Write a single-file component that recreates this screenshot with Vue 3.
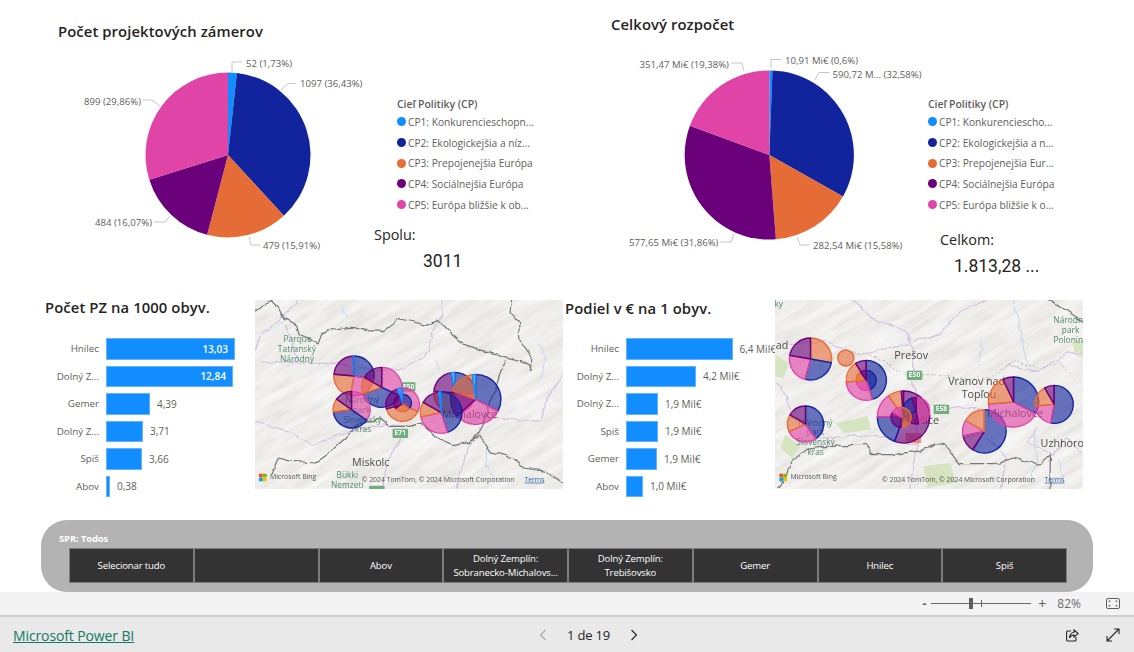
<script setup>
const C = { a: '#118DFF', b: '#12239E', c: '#E66C37', d: '#6B007B', e: '#E044A7' }

function point(cx, cy, r, deg) {
  const t = ((deg - 90) * Math.PI) / 180
  return [cx + r * Math.cos(t), cy + r * Math.sin(t)]
}
function arc(cx, cy, r, from, to) {
  if (to - from >= 360) {
    return `M${cx - r} ${cy}A${r} ${r} 0 1 1 ${cx + r} ${cy}A${r} ${r} 0 1 1 ${cx - r} ${cy}Z`
  }
  const [x0, y0] = point(cx, cy, r, from)
  const [x1, y1] = point(cx, cy, r, to)
  return `M${cx} ${cy}L${x0} ${y0}A${r} ${r} 0 ${to - from > 180 ? 1 : 0} 1 ${x1} ${y1}Z`
}
function slices(cx, cy, r, parts) {
  let from = 0
  return parts.map(([key, to]) => {
    const s = { d: arc(cx, cy, r, from, to), color: C[key] }
    from = to
    return s
  })
}
function pieFromPercents(cx, cy, r, pcts) {
  let sum = 0
  const keys = ['a', 'b', 'c', 'd', 'e']
  return slices(cx, cy, r, pcts.map((p, i) => {
    sum += p
    return [keys[i], i === pcts.length - 1 ? 360 : (sum / 100) * 360]
  }))
}

const legendLeft = ['CP1: Konkurencieschopn...', 'CP2: Ekologickejšia a níz...', 'CP3: Prepojenejšia Európa', 'CP4: Sociálnejšia Európa', 'CP5: Európa bližšie k ob...']
const legendRight = ['CP1: Konkurenciescho...', 'CP2: Ekologickejšia a n...', 'CP3: Prepojenejšia Eur...', 'CP4: Sociálnejšia Európa', 'CP5: Európa bližšie k o...']
const dots = [C.a, C.b, C.c, C.d, C.e]

const pies = [
  {
    cls: 'first', title: 'Počet projektových zámerov', vb: '58 50 312 240', w: 312,
    legend: legendLeft, statLabel: 'Spolu:', statValue: '3011',
    slices: pieFromPercents(228, 155, 82.5, [1.73, 36.43, 15.91, 16.07, 29.86]),
    labels: [
      { x: 246, y: 66.5, t: '52 (1,73%)' }, { x: 300, y: 87, t: '1097 (36,43%)' },
      { x: 84, y: 105, t: '899 (29,86%)' }, { x: 95, y: 226, t: '484 (16,07%)' }, { x: 263, y: 249, t: '479 (15,91%)' }
    ],
    leaders: ['M232 72V62H242', 'M281 90L288 83.5H296', 'M143 100H152L160 106', 'M154 222H165L170 216', 'M249 237L251 245H260']
  },
  {
    cls: 'second', title: 'Celkový rozpočet', vb: '611 50 314 240', w: 314,
    legend: legendRight, statLabel: 'Celkom:', statValue: '1.813,28 ...',
    slices: pieFromPercents(769.3, 155, 84.6, [0.6, 32.58, 15.58, 31.86, 19.38]),
    labels: [
      { x: 785, y: 64, t: '10,91 Mi€ (0,6%)' }, { x: 832.5, y: 78, t: '590,72 M... (32,58%)' },
      { x: 639.5, y: 68, t: '351,47 Mi€ (19,38%)' }, { x: 629, y: 246, t: '577,65 Mi€ (31,86%)' }, { x: 813, y: 249, t: '282,54 Mi€ (15,58%)' }
    ],
    leaders: ['M771 68V59.5H781', 'M815 80L819 72.5H829', 'M731 63H742L744 71', 'M720 242H731L734 234', 'M797 237L800 245H809']
  }
]

const chartLeft = {
  title: 'Počet PZ na 1000 obyv.',
  rows: [
    { l: 'Hnilec', w: 129, v: '13,03', inside: true }, { l: 'Dolný Z...', w: 127, v: '12,84', inside: true },
    { l: 'Gemer', w: 44, v: '4,39' }, { l: 'Dolný Z...', w: 37, v: '3,71' },
    { l: 'Spiš', w: 36, v: '3,66' }, { l: 'Abov', w: 4, v: '0,38' }
  ]
}
const chartRight = {
  title: 'Podiel v € na 1 obyv.',
  rows: [
    { l: 'Hnilec', w: 106.5, v: '6,4 Mil€' }, { l: 'Dolný Z...', w: 70, v: '4,2 Mil€' },
    { l: 'Dolný Z...', w: 32, v: '1,9 Mil€' }, { l: 'Spiš', w: 32, v: '1,9 Mil€' },
    { l: 'Gemer', w: 31, v: '1,9 Mil€' }, { l: 'Abov', w: 17, v: '1,0 Mil€' }
  ]
}

const bubbles1 = [
  slices(295, 234, 60, [['b', 100], ['e', 190], ['c', 275], ['d', 358], ['a', 360]]),
  slices(378, 268, 60, [['e', 115], ['b', 250], ['c', 300], ['d', 360]]),
  slices(288, 335, 55, [['e', 125], ['b', 262], ['c', 305], ['d', 360]]),
  slices(440, 320, 50, [['e', 115], ['c', 255], ['d', 340], ['a', 360]]),
  slices(440, 315, 26, [['b', 130], ['c', 230], ['d', 340], ['a', 360]]),
  slices(595, 285, 62, [['b', 95], ['e', 180], ['c', 275], ['d', 350], ['a', 360]]),
  slices(658, 304, 75, [['b', 118], ['e', 228], ['d', 290], ['c', 352], ['a', 360]]),
  slices(555, 344, 62, [['b', 162], ['e', 258], ['c', 300], ['d', 352], ['a', 360]])
]
const bubbles2 = [
  slices(115, 183, 63, [['c', 100], ['b', 195], ['e', 280], ['d', 360]]),
  slices(220, 180, 24, [['c', 360]]),
  slices(281, 247, 60, [['b', 162], ['e', 265], ['c', 328], ['d', 360]]),
  slices(281, 247, 30, [['b', 160], ['e', 262], ['c', 325], ['d', 360]]),
  slices(100, 378, 54, [['b', 145], ['e', 245], ['c', 300], ['d', 360]]),
  slices(392, 357, 78, [['d', 200], ['b', 270], ['e', 325], ['c', 355], ['d', 360]]),
  slices(430, 338, 40, [['e', 170], ['d', 240], ['b', 340], ['d', 360]]),
  slices(385, 358, 30, [['c', 180], ['d', 300], ['e', 360]]),
  slices(633, 400, 65, [['b', 212], ['d', 258], ['e', 300], ['c', 360]]),
  slices(720, 312, 75, [['b', 118], ['e', 265], ['c', 335], ['d', 360]]),
  slices(841, 319, 57, [['b', 190], ['e', 265], ['c', 330], ['d', 360]])
]

const maps = [
  {
    id: 'a', vb: '0 6 918 567', bubbles: bubbles1, greens: [],
    roads: [
      'M0 190Q100 197 240 195L330 215L440 215L520 160L530 100L555 60L560 6',
      'M0 155L20 110L90 50L130 6',
      'M0 370L100 400L170 440L280 400L390 380L450 385',
      'M450 395L400 480L380 573',
      'M520 340L640 370L700 360L850 370L870 300L918 235',
      'M650 420L610 520L600 573',
      'M90 80L130 190'
    ],
    rivers: ['M850 140L865 170L855 240', 'M690 440L690 500L720 550', 'M540 190L550 220', 'M260 30L275 60', 'M60 80L85 70'],
    borders: [
      'M0 40L25 22L50 10L70 30L85 60L125 85L132 108L185 135L200 108L240 92L290 88L330 98L385 100L400 88L430 62L470 72L510 82L548 68L585 105L625 140L680 158L740 178L790 190L815 200L820 218',
      'M745 190L725 255L680 375L650 430',
      'M50 530L70 480L110 490L180 495L215 470L270 420L300 385L370 360L400 385L460 385L495 375L540 420L590 440L640 430L670 415L700 460L770 480L800 510L870 520L918 555',
      'M765 6L760 40L785 70L790 130L825 180L820 218'
    ],
    texts: [
      { x: 127, y: 131, t: 'Parque', k: 'g' }, { x: 125, y: 161, t: 'Tatranský', k: 'g' }, { x: 125, y: 191, t: 'Národný', k: 'g' },
      { x: 320, y: 315, t: 'Národný', k: 'g' }, { x: 318, y: 345, t: 'park', k: 'g' }, { x: 320, y: 375, t: 'Slovenský', k: 'g' }, { x: 322, y: 403, t: 'kras', k: 'g' },
      { x: 345, y: 503, t: 'Miskolc', k: 'c' }, { x: 275, y: 541, t: 'Bükki', k: 'g' }, { x: 275, y: 571, t: 'Nemzeti', k: 'g' },
      { x: 640, y: 361, t: 'Michalovce', k: 'c' }
    ],
    signs: [{ x: 438, y: 253, w: 40, t: 'E50' }, { x: 410, y: 392, w: 46, t: 'E71' }, { x: 340, y: 563, w: 46, t: '' }],
    logoX: 12, bingX: 45, attrX: 318, termsX: 803
  },
  {
    id: 'b', vb: '9 6 918 567', bubbles: bubbles2,
    greens: ['M10 170L50 195L35 240L10 235Z', 'M190 375L285 355L295 395L215 405Z', 'M450 505L530 495L550 555L465 567Z', 'M895 135L927 125L927 180L905 170Z', 'M40 410L85 445L60 480L25 450Z'],
    roads: [
      'M240 6L300 60L400 100L420 150L420 260L450 320L620 330',
      'M420 130L500 110L560 40L640 6',
      'M50 140L160 130L250 170L350 150L410 140',
      'M9 250L30 270L60 350L150 420L300 410L430 440',
      'M430 300L430 450L410 573',
      'M700 200L790 220L890 160L927 170',
      'M790 390L760 430L840 470L880 420L927 470',
      'M640 420L700 480L680 573'
    ],
    rivers: ['M620 120L625 150L615 200', 'M720 6L740 100L760 200', 'M780 400L790 480L770 560', 'M850 480L870 540'],
    borders: [
      'M20 573L60 490L100 455L200 440L280 440L300 470L360 470L430 460L510 435L560 500L660 500L720 480L800 500L830 470L828 573',
      'M820 6L880 40L927 70'
    ],
    dashed: 'M230 160L300 170L400 230L480 230L560 240L650 240L720 190L800 210L860 195L900 240',
    texts: [
      { x: 20, y: 28, t: 'ky', k: 'g' }, { x: 883, y: 74, t: 'Národn', k: 'g' }, { x: 890, y: 104, t: 'park', k: 'g' }, { x: 883, y: 134, t: 'Polonin', k: 'g' },
      { x: 30, y: 153, t: 'ad', k: 'c' }, { x: 415, y: 183, t: 'Prešov', k: 'c' }, { x: 610, y: 261, t: 'Vranov nad', k: 'c' }, { x: 617, y: 301, t: 'Topľou', k: 'c' },
      { x: 725, y: 358, t: 'Michalovce', k: 'c' }, { x: 875, y: 446, t: 'Uzhhorod', k: 'c' }, { x: 450, y: 378, t: 'Košice', k: 'c' },
      { x: 130, y: 383, t: 'Národný', k: 'g' }, { x: 130, y: 410, t: 'park', k: 'g' }, { x: 130, y: 440, t: 'Slovenský', k: 'g' }, { x: 130, y: 470, t: 'kras', k: 'g' }
    ],
    signs: [{ x: 402, y: 218, w: 46, t: 'E50' }, { x: 482, y: 320, w: 46, t: 'E58' }],
    redSign: true,
    logoX: 22, bingX: 55, attrX: 328, termsX: 812
  }
]

const slicerItems = [
  ['Selecionar tudo'], [''], ['Abov'], ['Dolný Zemplín:', 'Sobranecko-Michalovs...'],
  ['Dolný Zemplín:', 'Trebišovsko'], ['Gemer'], ['Hnilec'], ['Spiš']
]
</script>

<template>
  <div class="page">
    <main class="report">
      <section class="pies">
        <article v-for="p in pies" :key="p.title" class="pie-panel" :class="p.cls">
          <h2 class="heading pie-title">{{ p.title }}</h2>
          <div class="pie-body">
            <svg class="pie-svg" :viewBox="p.vb" :width="p.w" height="240">
              <path v-for="(s, i) in p.slices" :key="i" :d="s.d" :fill="s.color" />
              <path v-for="(l, i) in p.leaders" :key="'l' + i" :d="l" class="leader" />
              <text v-for="(l, i) in p.labels" :key="'t' + i" :x="l.x" :y="l.y" class="pie-label">{{ l.t }}</text>
            </svg>
            <div class="side">
              <div class="legend">
                <div class="legend-title">Cieľ Politiky (CP)</div>
                <div v-for="(item, i) in p.legend" :key="item" class="legend-item">
                  <span class="dot" :style="{ background: dots[i] }"></span>
                  <span>{{ item }}</span>
                </div>
              </div>
              <div class="stat">
                <div class="stat-label">{{ p.statLabel }}</div>
                <div class="stat-value">{{ p.statValue }}</div>
              </div>
            </div>
          </div>
        </article>
      </section>

      <section class="lower">
        <template v-for="(chart, n) in [chartLeft, chartRight]" :key="chart.title">
          <div class="chart" :class="n ? 'chart-right' : 'chart-left'">
            <h2 class="heading chart-title">{{ chart.title }}</h2>
            <div class="bars">
              <div v-for="(r, i) in chart.rows" :key="i" class="bar-row">
                <span class="bar-label">{{ r.l }}</span>
                <span class="bar" :style="{ width: r.w + 'px' }">
                  <span v-if="r.inside" class="bar-inside">{{ r.v }}</span>
                </span>
                <span v-if="!r.inside" class="bar-value">{{ r.v }}</span>
              </div>
            </div>
          </div>
          <div class="map">
            <svg :viewBox="maps[n].vb" width="308" height="189" preserveAspectRatio="none">
              <defs>
                <filter :id="'hill-' + maps[n].id" x="0" y="0" width="100%" height="100%">
                  <feTurbulence type="fractalNoise" baseFrequency="0.008 0.055" numOctaves="4" :seed="n + 4" />
                  <feColorMatrix type="matrix" values="0 0 0 0 0.5  0 0 0 0 0.5  0 0 0 0 0.49  1.6 0 0 0 -0.66" />
                </filter>
                <filter :id="'shine-' + maps[n].id" x="0" y="0" width="100%" height="100%">
                  <feTurbulence type="fractalNoise" baseFrequency="0.006 0.04" numOctaves="3" :seed="n + 11" />
                  <feColorMatrix type="matrix" values="0 0 0 0 1  0 0 0 0 1  0 0 0 0 1  0 2 0 0 -0.85" />
                </filter>
                <filter :id="'wob-' + maps[n].id" x="-5%" y="-5%" width="110%" height="110%">
                  <feTurbulence type="fractalNoise" baseFrequency="0.035" numOctaves="2" seed="7" result="w" />
                  <feDisplacementMap in="SourceGraphic" in2="w" scale="16" xChannelSelector="R" yChannelSelector="G" />
                </filter>
              </defs>
              <rect x="0" y="0" width="940" height="600" fill="#efeeeb" />
              <g transform="rotate(-32 460 290)">
                <rect x="-300" y="-400" width="1500" height="1400" :filter="`url(#hill-${maps[n].id})`" opacity="0.32" />
                <rect x="-300" y="-400" width="1500" height="1400" :filter="`url(#shine-${maps[n].id})`" opacity="0.7" />
              </g>
              <path v-for="(g, i) in maps[n].greens" :key="'g' + i" :d="g" class="green" />
              <g :filter="`url(#wob-${maps[n].id})`">
                <path v-for="(r, i) in maps[n].rivers" :key="'v' + i" :d="r" class="river" />
                <path v-for="(r, i) in maps[n].roads" :key="'c' + i" :d="r" class="casing" />
                <path v-for="(r, i) in maps[n].roads" :key="'r' + i" :d="r" class="road" />
                <path v-if="maps[n].dashed" :d="maps[n].dashed" class="dashed" />
                <path v-for="(b, i) in maps[n].borders" :key="'b' + i" :d="b" class="border" />
              </g>
              <template v-for="(s, i) in maps[n].signs" :key="'s' + i">
                <rect :x="s.x" :y="s.y" :width="s.w" height="28" rx="3" fill="#6fae7d" />
                <text :x="s.x + s.w / 2" :y="s.y + 20" class="sign">{{ s.t }}</text>
              </template>
              <rect v-if="maps[n].redSign" x="398" y="405" width="46" height="30" fill="#ee8a80" />
              <text v-for="(t, i) in maps[n].texts" :key="'t' + i" :x="t.x" :y="t.y" class="place" :class="t.k === 'g' ? 'place-g' : 'place-c'">{{ t.t }}</text>
              <g v-for="(b, i) in maps[n].bubbles" :key="'p' + i">
                <path v-for="(s, j) in b" :key="j" :d="s.d" :fill="s.color" fill-opacity="0.62" :stroke="s.color" stroke-width="4" stroke-linejoin="round" />
              </g>
              <g :transform="`translate(${maps[n].logoX} 527)`">
                <rect width="11" height="11" fill="#f25022" />
                <rect x="12" width="11" height="11" fill="#7fba00" />
                <rect y="12" width="11" height="11" fill="#00a4ef" />
                <rect x="12" y="12" width="11" height="11" fill="#ffb900" />
              </g>
              <text :x="maps[n].bingX" y="544" class="attr">Microsoft Bing</text>
              <text :x="maps[n].attrX" y="551" class="attr">© 2024 TomTom, © 2024 Microsoft Corporation</text>
              <text :x="maps[n].termsX" y="551" class="attr terms">Terms</text>
            </svg>
          </div>
        </template>
      </section>

      <section class="slicer">
        <div class="slicer-title">SPR: Todos</div>
        <div class="slicer-items">
          <div v-for="(item, i) in slicerItems" :key="i" class="slicer-item">
            <span v-for="line in item" :key="line">{{ line }}</span>
          </div>
        </div>
      </section>
    </main>

    <div class="zoombar">
      <span class="zoom-sign">-</span>
      <span class="slider"><i class="thumb"></i><i class="tick"></i></span>
      <span class="zoom-plus">+</span>
      <span class="zoom-pct">82%</span>
      <svg class="fit" width="14" height="11" viewBox="0 0 14 11" fill="none" stroke="#5f5f5f">
        <rect x="0.5" y="0.5" width="13" height="10" rx="1.5" />
        <path d="M3 4V3H4.5M9.5 3H11V4M3 7V8H4.5M9.5 8H11V7" />
      </svg>
    </div>

    <footer class="footer">
      <a class="brand">Microsoft Power BI</a>
      <nav class="pager">
        <svg width="8" height="12" viewBox="0 0 8 12" fill="none" stroke="#a6a6a6" stroke-width="1.1"><path d="M6.5 1L1.5 6L6.5 11" /></svg>
        <span class="page-text">1 de 19</span>
        <svg width="8" height="12" viewBox="0 0 8 12" fill="none" stroke="#252423" stroke-width="1.1"><path d="M1.5 1L6.5 6L1.5 11" /></svg>
      </nav>
      <div class="actions">
        <svg width="13" height="13" viewBox="0 0 13 13" fill="none" stroke="#252423" stroke-width="1.1">
          <path d="M5 2H1.5A1 1 0 0 0 .6 3V11A1 1 0 0 0 1.5 12H9A1 1 0 0 0 10 11V8" />
          <path d="M8 1L12.2 4.5L8 8V6C6 6 4.5 6.8 3.5 9C3.7 5.8 5.5 3.6 8 3.2Z" />
        </svg>
        <svg width="14" height="14" viewBox="0 0 14 14" fill="none" stroke="#252423" stroke-width="1.1">
          <path d="M1 13L13 1M8 1H13V6M1 8V13H6" />
        </svg>
      </div>
    </footer>
  </div>
</template>

<style>
html, body { margin: 0; background: #fff; }
</style>

<style scoped>
.page {
  width: 1134px;
  height: 652px;
  overflow: hidden;
  display: flex;
  flex-direction: column;
  font-family: "Open Sans", "Noto Sans", sans-serif;
  color: #252423;
}
.report { height: 592px; flex: none; overflow: hidden; }
.heading { margin: 0; font-size: 14.8px; line-height: 18px; font-weight: 600; color: #252423; letter-spacing: 0.1px; }

.pies { display: grid; grid-template-columns: 560px 574px; height: 295px; }
.pie-panel { display: flex; flex-direction: column; }
.pie-panel.first { padding-left: 58px; }
.pie-panel.second { padding-left: 51px; }
.first .pie-title { margin-top: 22px; margin-bottom: 10px; }
.second .pie-title { margin-top: 15px; margin-bottom: 17px; }
.pie-body { display: flex; }
.pie-svg { display: block; flex: none; }
.pie-label { font-size: 9.6px; fill: #605e5c; }
.leader { fill: none; stroke: #c8c6c4; stroke-width: 1; }
.legend { padding-top: 45.5px; }
.first .legend { margin-left: 27px; }
.second .legend { margin-left: 3px; }
.legend-title { font-size: 10.5px; line-height: 16px; font-weight: 600; color: #605e5c; white-space: nowrap; letter-spacing: -0.05px; }
.legend-item { display: flex; align-items: center; height: 20.7px; font-size: 10.2px; color: #605e5c; white-space: nowrap; gap: 1px; }
.dot { width: 9px; height: 9px; border-radius: 50%; margin-right: 1px; flex: none; }
.first .stat { margin-left: 4px; padding-top: 10.5px; }
.second .stat { margin-left: 15px; padding-top: 15.5px; }
.stat-label { font-size: 14.4px; line-height: 20px; }
.stat-value { font-family: Roboto, sans-serif; font-size: 17.5px; line-height: 24px; margin-top: 4px; }
.first .stat-value { margin-left: 49px; }
.second .stat-value { margin-left: 14px; }

.lower { display: grid; grid-template-columns: 255px 308px 212px 308px; height: 225px; }
.chart { min-width: 0; }
.chart-left { padding-left: 45px; }
.chart-right { padding-left: 2px; }
.chart-title { margin-top: 3px; white-space: nowrap; }
.chart-right .chart-title { margin-top: 4px; }
.bars { margin-top: 19px; }
.chart-right .bars { margin-top: 18px; }
.bar-row { display: flex; align-items: center; height: 27.5px; white-space: nowrap; }
.bar-label { width: 54px; text-align: right; font-size: 9.8px; color: #605e5c; margin-right: 7px; flex: none; }
.bar { height: 21.5px; box-sizing: border-box; background: #118DFF; border: 1px solid #62b4ff; display: flex; align-items: center; justify-content: flex-end; flex: none; }
.bar-inside { color: #fff; font-size: 10px; font-weight: 600; padding-right: 6px; }
.bar-value { margin-left: 7px; font-size: 10px; color: #605e5c; }
.map { margin-top: 5px; height: 189px; overflow: hidden; }
.map svg { display: block; filter: blur(0.35px); }
.green { fill: #d6e4c0; }
.casing { fill: none; stroke: #f8f7f5; stroke-width: 7; stroke-linejoin: round; }
.road { fill: none; stroke: #d6c6e0; stroke-width: 4.5; stroke-linejoin: round; }
.river { fill: none; stroke: #bfd6ee; stroke-width: 3; }
.dashed { fill: none; stroke: #a3a3a3; stroke-width: 2; stroke-dasharray: 7 6; }
.border { fill: none; stroke: #767676; stroke-width: 3.6; stroke-linejoin: round; }
.place { text-anchor: middle; }
.place-g { font-size: 25px; fill: #4f8a6c; }
.place-c { font-size: 32px; fill: #4a4a4a; }
.sign { font-size: 20px; font-weight: 700; fill: #fff; text-anchor: middle; }
.attr { font-size: 20.5px; fill: #555; }
.terms { fill: #2b5ea8; text-decoration: underline; }

.slicer {
  margin-left: 41px;
  width: 1052px;
  height: 72px;
  box-sizing: border-box;
  background: #b3b3b3;
  border-radius: 26px;
  padding: 12px 26px 0 18px;
}
.slicer-title { font-size: 9.5px; line-height: 13px; font-weight: 700; color: #fff; letter-spacing: -0.15px; }
.slicer-items { display: grid; grid-template-columns: repeat(8, 1fr); margin: 3px 0 0 10px; }
.slicer-item {
  height: 35px;
  box-sizing: border-box;
  background: #333;
  border: 1px solid #7d7d7d;
  color: #fff;
  font-size: 9.6px;
  line-height: 14px;
  letter-spacing: -0.15px;
  display: flex;
  flex-direction: column;
  align-items: center;
  justify-content: center;
  white-space: nowrap;
}

.zoombar {
  height: 23px;
  flex: none;
  background: #f3f3f3;
  border-bottom: 2px solid #cfcfcf;
  display: flex;
  align-items: center;
  justify-content: flex-end;
  color: #5f5f5f;
  font-size: 12px;
  padding-right: 14px;
}
.zoom-sign { font-weight: 700; margin-right: 5px; }
.slider { position: relative; width: 100px; height: 1px; background: #666; }
.thumb { position: absolute; left: 38px; top: -5px; width: 4px; height: 11px; background: #5f5f5f; }
.tick { position: absolute; left: 50px; top: -3px; width: 1px; height: 7px; background: #666; }
.zoom-plus { margin-left: 7px; font-size: 14px; }
.zoom-pct { margin-left: 11px; font-size: 12px; color: #6b6b6b; }
.fit { margin-left: 25px; }

.footer {
  flex: 1;
  background: #e9e9e9;
  display: flex;
  align-items: center;
  padding: 1px 14px 0 13px;
}
.brand { width: 526px; font-size: 14px; color: #117865; text-decoration: underline; white-space: nowrap; flex: none; letter-spacing: -0.12px; }
.pager { display: flex; align-items: center; }
.page-text { font-size: 13px; margin: 0 20px; letter-spacing: -0.2px; }
.actions { margin-left: auto; display: flex; align-items: center; gap: 27px; }
</style>
